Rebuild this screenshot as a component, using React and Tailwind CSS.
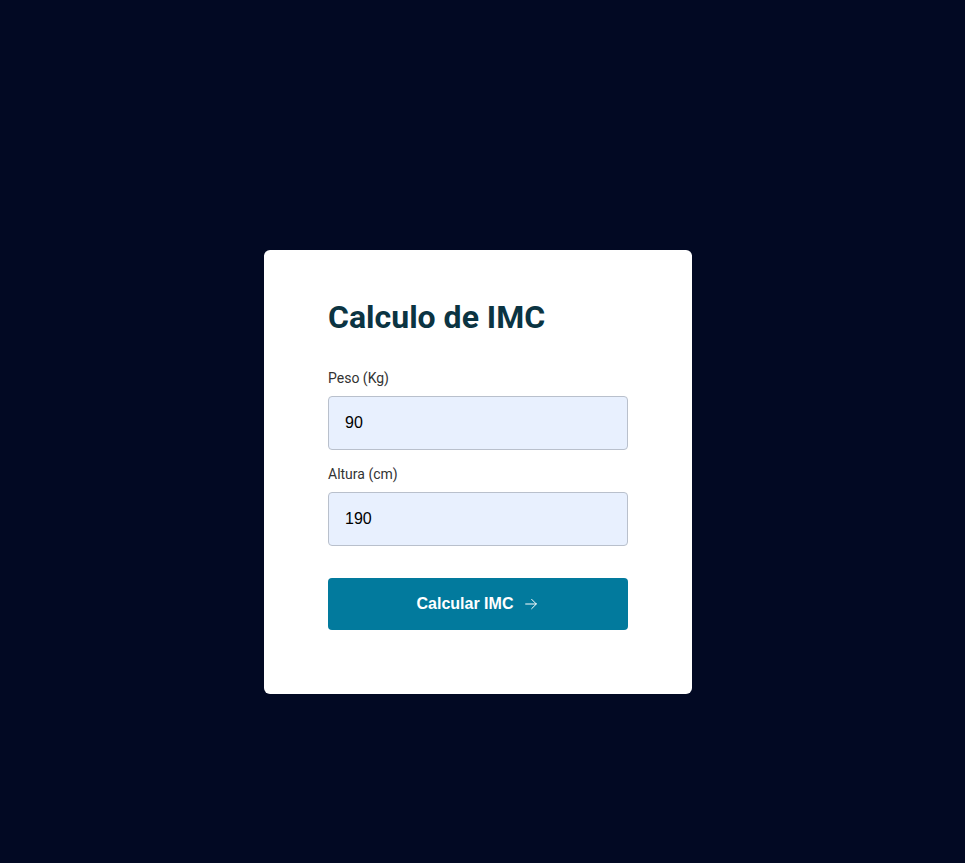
import React, { useState } from 'react';

const App = () => {
  const [peso, setPeso] = useState('90');
  const [altura, setAltura] = useState('190');

  return (
    <div className="min-h-screen w-full bg-[#020923] flex items-center justify-center pt-[81px] pr-[9px] font-['Roboto',sans-serif]">
      <div className="bg-white rounded-md w-[428px] px-16 pt-12 pb-16">
        <h1 className="text-[32px] font-bold text-[#0b3442] leading-[38px]">Calculo de IMC</h1>

        <div className="mt-[34px]">
          <label className="block text-sm text-[#333] leading-4 mb-[10px]">Peso (Kg)</label>
          <input
            type="text"
            value={peso}
            onChange={(e) => setPeso(e.target.value)}
            className="w-full h-[54px] px-4 rounded bg-[#e8f0fe] border border-[#b9c0cc] text-black text-base font-['Liberation_Sans',Arial,sans-serif] outline-none"
          />
        </div>

        <div className="mt-[16px]">
          <label className="block text-sm text-[#333] leading-4 mb-[10px]">Altura (cm)</label>
          <input
            type="text"
            value={altura}
            onChange={(e) => setAltura(e.target.value)}
            className="w-full h-[54px] px-4 rounded bg-[#e8f0fe] border border-[#b9c0cc] text-black text-base font-['Liberation_Sans',Arial,sans-serif] outline-none"
          />
        </div>

        <button className="mt-8 w-full h-[52px] rounded bg-[#027a9d] text-white font-bold text-base font-['Liberation_Sans',Arial,sans-serif] flex items-center justify-center gap-[10px]">
          Calcular IMC
          <svg width="16" height="16" viewBox="0 0 24 24" fill="none" stroke="currentColor" strokeWidth="1.5" strokeLinecap="round" strokeLinejoin="round">
            <path d="M4 12h16" />
            <path d="M13 5l7 7-7 7" />
          </svg>
        </button>
      </div>
    </div>
  );
};

export default App;
